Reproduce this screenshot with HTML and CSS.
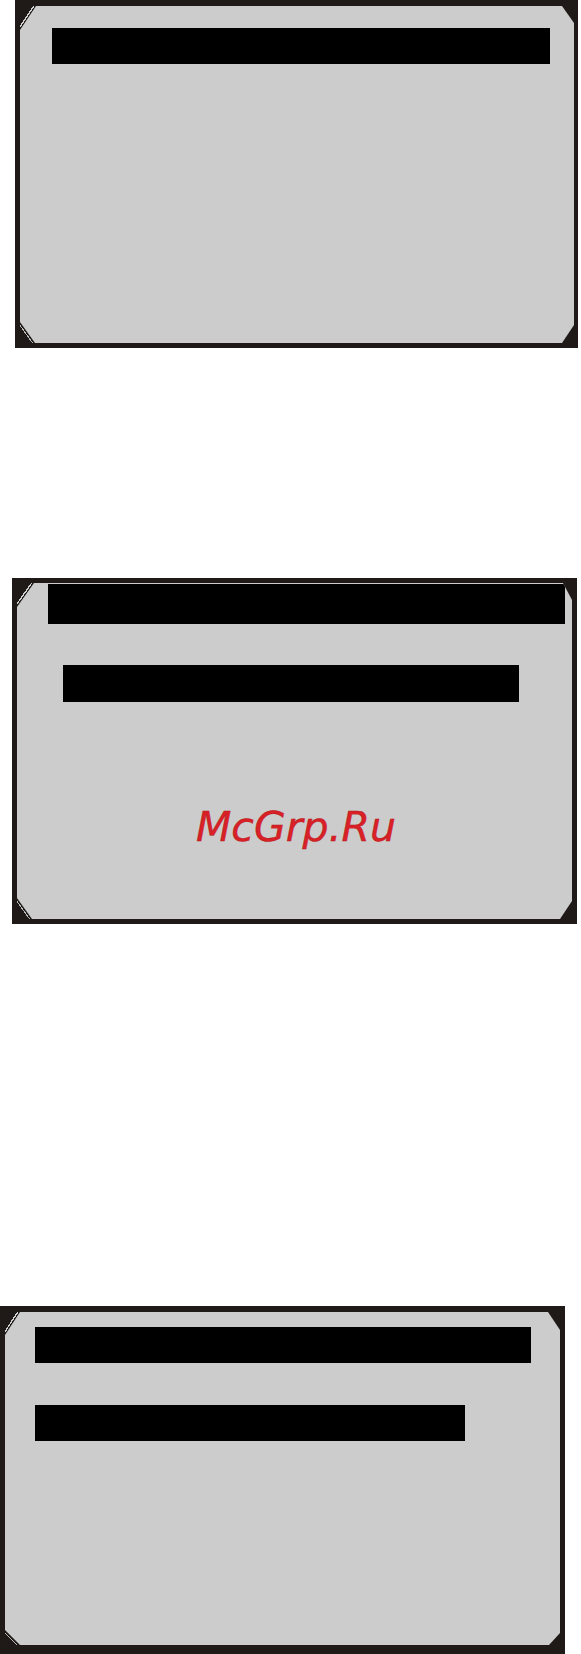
FILE: index.html
```html
<!DOCTYPE html>
<html>
<head>
<meta charset="utf-8">
<link rel="stylesheet" href="styles.css">
</head>
<body>
<div class="page">
  <div class="screen s1">
    <div class="lcd">
      <div class="bar b1-1"></div>
    </div>
  </div>
  <div class="screen s2">
    <div class="lcd">
      <div class="bar b2-1"></div>
      <div class="bar b2-2"></div>
      <div class="mark">McGrp.Ru</div>
    </div>
  </div>
  <div class="screen s3">
    <div class="lcd">
      <div class="bar b3-1"></div>
      <div class="bar b3-2"></div>
    </div>
  </div>
</div>
</body>
</html>
```
FILE: styles.css
```css
html, body {
  margin: 0;
  padding: 0;
  background: #ffffff;
}
.page {
  width: 581px;
  height: 1654px;
  overflow: hidden;
  display: flex;
  flex-direction: column;
  align-items: flex-start;
}
.screen {
  box-sizing: border-box;
  flex: none;
  background-color: #1f1a17;
  background-image:
    linear-gradient(to bottom right, transparent calc(50% - 2.5px), #d0d0d0 calc(50% - 2.5px), #d0d0d0 calc(50% - 1.2px), transparent calc(50% - 1.2px)),
    linear-gradient(to top right, transparent calc(50% - 2.5px), #b8b8b8 calc(50% - 2.5px), #b8b8b8 calc(50% - 1.5px), transparent calc(50% - 1.5px));
  background-repeat: no-repeat;
  background-origin: content-box;
  background-position: left top, left bottom;
  background-size: var(--tlx) var(--tly), var(--blx) var(--bly);
}
.lcd {
  height: 100%;
  background: #cccccc;
  overflow: hidden;
  display: flex;
  flex-direction: column;
  align-items: flex-start;
  clip-path: polygon(
    var(--tlx) 0,
    calc(100% - var(--trx)) 0,
    100% var(--try),
    100% calc(100% - var(--bry)),
    calc(100% - var(--brx)) 100%,
    var(--blx) 100%,
    0 calc(100% - var(--bly)),
    0 var(--tly)
  );
}
.bar {
  background: #000000;
  flex: none;
}
.s1 {
  width: 563px;
  height: 348px;
  margin-left: 15px;
  padding: 6px 4px 5px 5px;
  --tlx: 16px; --tly: 24px;
  --trx: 12px; --try: 17px;
  --brx: 12px; --bry: 18px;
  --blx: 15px; --bly: 21px;
}
.s2 {
  width: 565px;
  height: 346px;
  margin-top: 230px;
  margin-left: 12px;
  padding: 5px;
  --tlx: 17px; --tly: 24px;
  --trx: 9px; --try: 17px;
  --brx: 12px; --bry: 18px;
  --blx: 15px; --bly: 21px;
}
.s3 {
  width: 565px;
  height: 348px;
  margin-top: 382px;
  margin-left: 0;
  padding: 6px 5px 9px 5px;
  --tlx: 15px; --tly: 23px;
  --trx: 12px; --try: 18px;
  --brx: 11px; --bry: 12px;
  --blx: 15px; --bly: 15px;
}
.b1-1 { margin: 22px 0 0 32px; width: 498px; height: 36px; }
.b2-1 { margin: 1px 0 0 31px; width: 517px; height: 40px; }
.b2-2 { margin: 41px 0 0 46px; width: 456px; height: 37px; }
.b3-1 { margin: 15px 0 0 30px; width: 496px; height: 36px; }
.b3-2 { margin: 42px 0 0 30px; width: 430px; height: 36px; }
.mark {
  margin: 105px 0 0 179px;
  font-family: "DejaVu Sans", Verdana, sans-serif;
  font-style: oblique;
  font-size: 41px;
  line-height: 41px;
  color: #d92027;
  -webkit-text-stroke: 0.4px #b01818;
  white-space: nowrap;
}
```
